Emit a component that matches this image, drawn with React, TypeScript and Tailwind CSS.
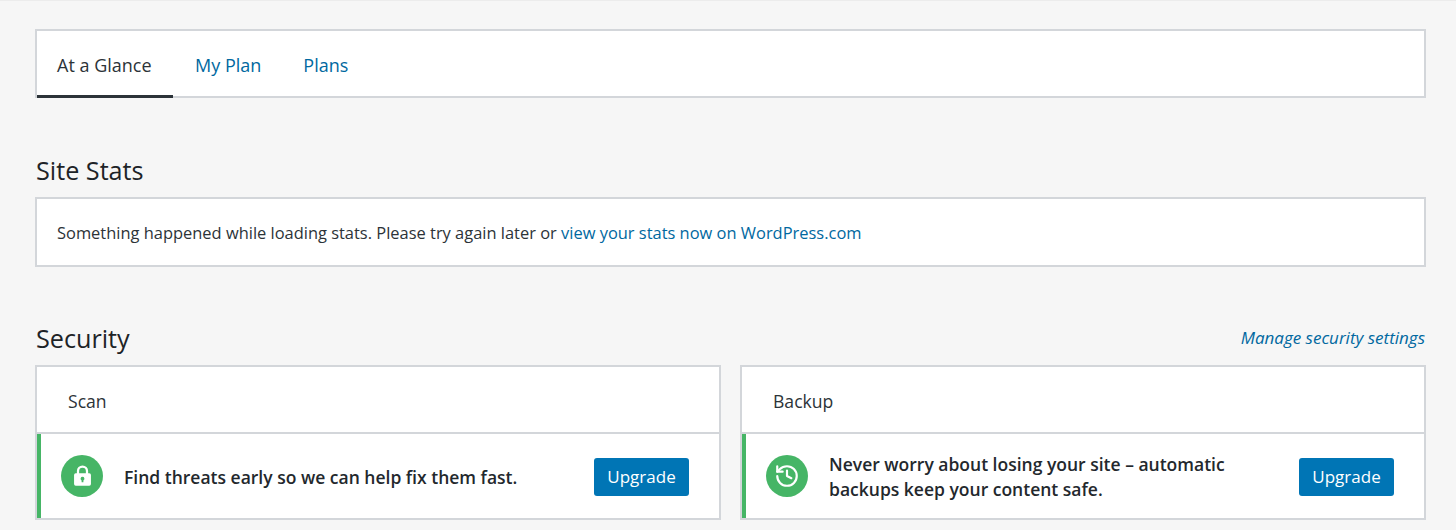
import { History } from 'lucide-react';

const font = { fontFamily: '"Open Sans", sans-serif' };

function LockIcon() {
  return (
    <svg viewBox="0 0 24 24" className="w-[27px] h-[27px]" fill="#fff">
      <path fillRule="evenodd" d="M17 10V8A5 5 0 0 0 7 8v2H6a1.5 1.5 0 0 0-1.5 1.5v8A1.5 1.5 0 0 0 6 21h12a1.5 1.5 0 0 0 1.5-1.5v-8A1.5 1.5 0 0 0 18 10h-1Zm-8 0V8a3 3 0 0 1 6 0v2H9Zm3 3.2a1.7 1.7 0 0 1 .8 3.2V18h-1.6v-1.6a1.7 1.7 0 0 1 .8-3.2Z" />
    </svg>
  );
}

function SecurityCard({ title, icon, text }: { title: string; icon: React.ReactNode; text: React.ReactNode }) {
  return (
    <div className="flex-1 bg-white border-2 border-[#d3d6da] h-[155px] flex flex-col">
      <div className="h-[67px] pt-[3px] flex items-center pl-[31px] text-[17.6px] text-[#2c3338] border-b-2 border-[#d3d6da]">{title}</div>
      <div className="flex-1 pt-[2px] flex items-center border-l-[4px] border-[#46b566] pl-[20px] pr-[30px]">
        <div className="w-[42px] h-[42px] -mt-[3px] rounded-full bg-[#46b566] flex items-center justify-center shrink-0">{icon}</div>
        <div className="flex-1 pl-[21px] pr-[60px] text-[17.5px] leading-[25px] font-semibold text-[#23282d]">{text}</div>
        <button className="w-[95px] h-[38px] rounded-[3px] bg-[#0075b5] text-white text-[17px] shrink-0">Upgrade</button>
      </div>
    </div>
  );
}

export default function App() {
  return (
    <div style={font} className="min-h-[530px] bg-[#f6f6f6] pl-[35px] pr-[30px] pt-[29px] border-t border-[#ececec]">
      <div className="h-[69px] -mt-px bg-white border-2 border-[#d3d6da] flex text-[18px]">
        <div className="w-[136px] pl-[20px] pt-[4px] flex items-center border-b-[3px] border-[#2c3338] text-[#2c3338] h-[67px] -mb-px">At a Glance</div>
        <div className="pl-[22px] pt-[4px] flex items-center text-[#0068a0]">My Plan</div>
        <div className="pl-[42px] pt-[4px] flex items-center text-[#0068a0]">Plans</div>
      </div>

      <h2 className="mt-[52px] pl-px text-[25.2px] leading-[40px] text-[#1d2327]">Site Stats</h2>
      <div className="mt-[7px] h-[70px] pt-[2px] bg-white border-2 border-[#d3d6da] flex items-center pl-[20px] text-[16.45px] text-[#2c3338]">
        <span>
          Something happened while loading stats. Please try again later or{' '}
          <span className="text-[#0068a0]">view your stats now on WordPress.com</span>
        </span>
      </div>

      <div className="mt-[52px] flex items-center justify-between h-[40px]">
        <h2 className="pl-px text-[25.2px] text-[#1d2327]">Security</h2>
        <span className="italic text-[17px] -mt-[2px] mr-px text-[#0068a0]">Manage security settings</span>
      </div>
      <div className="mt-[6px] flex gap-[19px]">
        <SecurityCard title="Scan" icon={<LockIcon />} text="Find threats early so we can help fix them fast." />
        <SecurityCard
          title="Backup"
          icon={<History className="w-[26px] h-[26px] text-white" strokeWidth={2} />}
          text="Never worry about losing your site – automatic backups keep your content safe."
        />
      </div>
    </div>
  );
}
